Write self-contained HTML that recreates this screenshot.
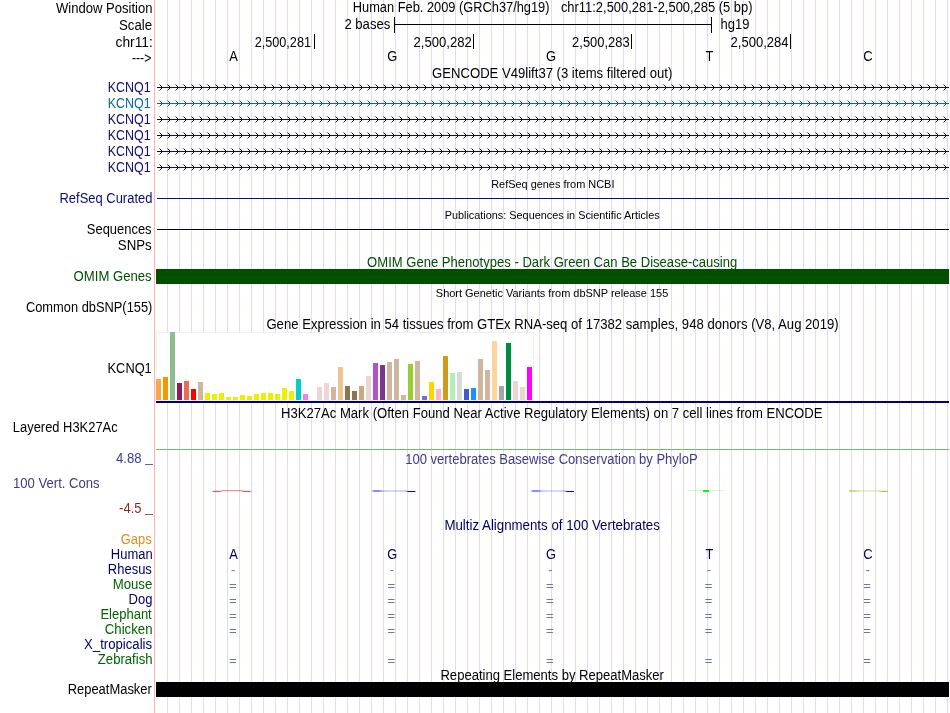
<!DOCTYPE html>
<html lang="en"><head><meta charset="utf-8"><title>UCSC Genome Browser - hg19 chr11:2,500,281-2,500,285</title>
<style>html,body{margin:0;padding:0;background:#fff}svg{display:block;filter:opacity(1)}text{font-family:"Liberation Sans",Arial,Helvetica,sans-serif;font-size:14px}.s{font-size:11.5px}.e{font-size:13px}.r{text-anchor:end}.m{text-anchor:middle}</style></head><body>
<svg width="950" height="713" viewBox="0 0 950 713">
<rect width="950" height="713" fill="#fff"/>
<g shape-rendering="crispEdges">
<path d="M167.5 0V713M179.5 0V713M191.5 0V713M203.5 0V713M215.5 0V713M227.5 0V713M239.5 0V713M251.5 0V713M263.5 0V713M275.5 0V713M287.5 0V713M299.5 0V713M311.5 0V713M323.5 0V713M335.5 0V713M347.5 0V713M359.5 0V713M371.5 0V713M383.5 0V713M395.5 0V713M407.5 0V713M419.5 0V713M431.5 0V713M443.5 0V713M455.5 0V713M467.5 0V713M479.5 0V713M491.5 0V713M503.5 0V713M515.5 0V713M527.5 0V713M539.5 0V713M551.5 0V713M563.5 0V713M575.5 0V713M587.5 0V713M599.5 0V713M611.5 0V713M623.5 0V713M635.5 0V713M647.5 0V713M659.5 0V713M671.5 0V713M683.5 0V713M695.5 0V713M707.5 0V713M719.5 0V713M731.5 0V713M743.5 0V713M755.5 0V713M767.5 0V713M779.5 0V713M791.5 0V713M803.5 0V713M815.5 0V713M827.5 0V713M839.5 0V713M851.5 0V713M863.5 0V713M875.5 0V713M887.5 0V713M899.5 0V713M911.5 0V713M923.5 0V713M935.5 0V713M947.5 0V713" stroke="#dcdcff" stroke-width="1" fill="none"/>
<rect x="154" y="0" width="1" height="713" fill="#ffb4b4"/>
</g>
<text x="56.00" y="13" textLength="96.52" lengthAdjust="spacingAndGlyphs">Window Position</text>
<text x="119.01" y="30" textLength="33.09" lengthAdjust="spacingAndGlyphs">Scale</text>
<text x="115.59" y="47" textLength="37.24" lengthAdjust="spacingAndGlyphs">chr11:</text>
<text x="131.96" y="63" textLength="19.33" lengthAdjust="spacingAndGlyphs">---&gt;</text>
<text x="352.77" y="12" textLength="196.76" lengthAdjust="spacingAndGlyphs">Human Feb. 2009 (GRCh37/hg19)</text>
<text x="560.92" y="12" textLength="191.63" lengthAdjust="spacingAndGlyphs">chr11:2,500,281-2,500,285 (5 bp)</text>
<text x="344.42" y="29" textLength="45.90" lengthAdjust="spacingAndGlyphs">2 bases</text>
<text x="720.57" y="29" textLength="28.83" lengthAdjust="spacingAndGlyphs">hg19</text>
<g shape-rendering="crispEdges" fill="#000">
<rect x="394" y="24" width="318" height="1"/><rect x="394" y="17" width="1" height="16"/><rect x="711" y="17" width="1" height="16"/>
<rect x="314" y="34" width="1" height="15"/>
<rect x="473" y="34" width="1" height="15"/>
<rect x="631" y="34" width="1" height="15"/>
<rect x="790" y="34" width="1" height="15"/>
</g>
<text x="254.63" y="47" textLength="56.37" lengthAdjust="spacingAndGlyphs">2,500,281</text>
<text x="413.52" y="47" textLength="58.21" lengthAdjust="spacingAndGlyphs">2,500,282</text>
<text x="572.12" y="47" textLength="57.58" lengthAdjust="spacingAndGlyphs">2,500,283</text>
<text x="730.62" y="47" textLength="57.97" lengthAdjust="spacingAndGlyphs">2,500,284</text>
<text x="229.19" y="61" textLength="8.60" lengthAdjust="spacingAndGlyphs">A</text>
<text x="387.28" y="61" textLength="10.01" lengthAdjust="spacingAndGlyphs">G</text>
<text x="545.88" y="61" textLength="10.01" lengthAdjust="spacingAndGlyphs">G</text>
<text x="705.38" y="61" textLength="7.89" lengthAdjust="spacingAndGlyphs">T</text>
<text x="863.19" y="61" textLength="9.41" lengthAdjust="spacingAndGlyphs">C</text>
<text x="432.12" y="78" textLength="240.22" lengthAdjust="spacingAndGlyphs">GENCODE V49lift37 (3 items filtered out)</text>
<text x="107.80" y="92" fill="#0c0c78" textLength="42.94" lengthAdjust="spacingAndGlyphs">KCNQ1</text>
<rect x="157" y="87" width="792" height="1" fill="#0c0c78" shape-rendering="crispEdges"/>
<path d="M159 84L162 87L159 90M167 84L170 87L167 90M175 84L178 87L175 90M183 84L186 87L183 90M191 84L194 87L191 90M199 84L202 87L199 90M207 84L210 87L207 90M215 84L218 87L215 90M223 84L226 87L223 90M231 84L234 87L231 90M239 84L242 87L239 90M247 84L250 87L247 90M255 84L258 87L255 90M263 84L266 87L263 90M271 84L274 87L271 90M279 84L282 87L279 90M287 84L290 87L287 90M295 84L298 87L295 90M303 84L306 87L303 90M311 84L314 87L311 90M319 84L322 87L319 90M327 84L330 87L327 90M335 84L338 87L335 90M343 84L346 87L343 90M351 84L354 87L351 90M359 84L362 87L359 90M367 84L370 87L367 90M375 84L378 87L375 90M383 84L386 87L383 90M391 84L394 87L391 90M399 84L402 87L399 90M407 84L410 87L407 90M415 84L418 87L415 90M423 84L426 87L423 90M431 84L434 87L431 90M439 84L442 87L439 90M447 84L450 87L447 90M455 84L458 87L455 90M463 84L466 87L463 90M471 84L474 87L471 90M479 84L482 87L479 90M487 84L490 87L487 90M495 84L498 87L495 90M503 84L506 87L503 90M511 84L514 87L511 90M519 84L522 87L519 90M527 84L530 87L527 90M535 84L538 87L535 90M543 84L546 87L543 90M551 84L554 87L551 90M559 84L562 87L559 90M567 84L570 87L567 90M575 84L578 87L575 90M583 84L586 87L583 90M591 84L594 87L591 90M599 84L602 87L599 90M607 84L610 87L607 90M615 84L618 87L615 90M623 84L626 87L623 90M631 84L634 87L631 90M639 84L642 87L639 90M647 84L650 87L647 90M655 84L658 87L655 90M663 84L666 87L663 90M671 84L674 87L671 90M679 84L682 87L679 90M687 84L690 87L687 90M695 84L698 87L695 90M703 84L706 87L703 90M711 84L714 87L711 90M719 84L722 87L719 90M727 84L730 87L727 90M735 84L738 87L735 90M743 84L746 87L743 90M751 84L754 87L751 90M759 84L762 87L759 90M767 84L770 87L767 90M775 84L778 87L775 90M783 84L786 87L783 90M791 84L794 87L791 90M799 84L802 87L799 90M807 84L810 87L807 90M815 84L818 87L815 90M823 84L826 87L823 90M831 84L834 87L831 90M839 84L842 87L839 90M847 84L850 87L847 90M855 84L858 87L855 90M863 84L866 87L863 90M871 84L874 87L871 90M879 84L882 87L879 90M887 84L890 87L887 90M895 84L898 87L895 90M903 84L906 87L903 90M911 84L914 87L911 90M919 84L922 87L919 90M927 84L930 87L927 90M935 84L938 87L935 90M943 84L946 87L943 90" transform="translate(.5 .5)" stroke="#0c0c78" stroke-width="1" fill="none"/>
<text x="107.80" y="108" fill="#0b66ad" textLength="42.94" lengthAdjust="spacingAndGlyphs">KCNQ1</text>
<rect x="157" y="103" width="792" height="1" fill="#0b66ad" shape-rendering="crispEdges"/>
<path d="M159 100L162 103L159 106M167 100L170 103L167 106M175 100L178 103L175 106M183 100L186 103L183 106M191 100L194 103L191 106M199 100L202 103L199 106M207 100L210 103L207 106M215 100L218 103L215 106M223 100L226 103L223 106M231 100L234 103L231 106M239 100L242 103L239 106M247 100L250 103L247 106M255 100L258 103L255 106M263 100L266 103L263 106M271 100L274 103L271 106M279 100L282 103L279 106M287 100L290 103L287 106M295 100L298 103L295 106M303 100L306 103L303 106M311 100L314 103L311 106M319 100L322 103L319 106M327 100L330 103L327 106M335 100L338 103L335 106M343 100L346 103L343 106M351 100L354 103L351 106M359 100L362 103L359 106M367 100L370 103L367 106M375 100L378 103L375 106M383 100L386 103L383 106M391 100L394 103L391 106M399 100L402 103L399 106M407 100L410 103L407 106M415 100L418 103L415 106M423 100L426 103L423 106M431 100L434 103L431 106M439 100L442 103L439 106M447 100L450 103L447 106M455 100L458 103L455 106M463 100L466 103L463 106M471 100L474 103L471 106M479 100L482 103L479 106M487 100L490 103L487 106M495 100L498 103L495 106M503 100L506 103L503 106M511 100L514 103L511 106M519 100L522 103L519 106M527 100L530 103L527 106M535 100L538 103L535 106M543 100L546 103L543 106M551 100L554 103L551 106M559 100L562 103L559 106M567 100L570 103L567 106M575 100L578 103L575 106M583 100L586 103L583 106M591 100L594 103L591 106M599 100L602 103L599 106M607 100L610 103L607 106M615 100L618 103L615 106M623 100L626 103L623 106M631 100L634 103L631 106M639 100L642 103L639 106M647 100L650 103L647 106M655 100L658 103L655 106M663 100L666 103L663 106M671 100L674 103L671 106M679 100L682 103L679 106M687 100L690 103L687 106M695 100L698 103L695 106M703 100L706 103L703 106M711 100L714 103L711 106M719 100L722 103L719 106M727 100L730 103L727 106M735 100L738 103L735 106M743 100L746 103L743 106M751 100L754 103L751 106M759 100L762 103L759 106M767 100L770 103L767 106M775 100L778 103L775 106M783 100L786 103L783 106M791 100L794 103L791 106M799 100L802 103L799 106M807 100L810 103L807 106M815 100L818 103L815 106M823 100L826 103L823 106M831 100L834 103L831 106M839 100L842 103L839 106M847 100L850 103L847 106M855 100L858 103L855 106M863 100L866 103L863 106M871 100L874 103L871 106M879 100L882 103L879 106M887 100L890 103L887 106M895 100L898 103L895 106M903 100L906 103L903 106M911 100L914 103L911 106M919 100L922 103L919 106M927 100L930 103L927 106M935 100L938 103L935 106M943 100L946 103L943 106" transform="translate(.5 .5)" stroke="#0b66ad" stroke-width="1" fill="none"/>
<text x="107.80" y="124" fill="#0c0c78" textLength="42.94" lengthAdjust="spacingAndGlyphs">KCNQ1</text>
<rect x="157" y="119" width="792" height="1" fill="#0c0c78" shape-rendering="crispEdges"/>
<path d="M159 116L162 119L159 122M167 116L170 119L167 122M175 116L178 119L175 122M183 116L186 119L183 122M191 116L194 119L191 122M199 116L202 119L199 122M207 116L210 119L207 122M215 116L218 119L215 122M223 116L226 119L223 122M231 116L234 119L231 122M239 116L242 119L239 122M247 116L250 119L247 122M255 116L258 119L255 122M263 116L266 119L263 122M271 116L274 119L271 122M279 116L282 119L279 122M287 116L290 119L287 122M295 116L298 119L295 122M303 116L306 119L303 122M311 116L314 119L311 122M319 116L322 119L319 122M327 116L330 119L327 122M335 116L338 119L335 122M343 116L346 119L343 122M351 116L354 119L351 122M359 116L362 119L359 122M367 116L370 119L367 122M375 116L378 119L375 122M383 116L386 119L383 122M391 116L394 119L391 122M399 116L402 119L399 122M407 116L410 119L407 122M415 116L418 119L415 122M423 116L426 119L423 122M431 116L434 119L431 122M439 116L442 119L439 122M447 116L450 119L447 122M455 116L458 119L455 122M463 116L466 119L463 122M471 116L474 119L471 122M479 116L482 119L479 122M487 116L490 119L487 122M495 116L498 119L495 122M503 116L506 119L503 122M511 116L514 119L511 122M519 116L522 119L519 122M527 116L530 119L527 122M535 116L538 119L535 122M543 116L546 119L543 122M551 116L554 119L551 122M559 116L562 119L559 122M567 116L570 119L567 122M575 116L578 119L575 122M583 116L586 119L583 122M591 116L594 119L591 122M599 116L602 119L599 122M607 116L610 119L607 122M615 116L618 119L615 122M623 116L626 119L623 122M631 116L634 119L631 122M639 116L642 119L639 122M647 116L650 119L647 122M655 116L658 119L655 122M663 116L666 119L663 122M671 116L674 119L671 122M679 116L682 119L679 122M687 116L690 119L687 122M695 116L698 119L695 122M703 116L706 119L703 122M711 116L714 119L711 122M719 116L722 119L719 122M727 116L730 119L727 122M735 116L738 119L735 122M743 116L746 119L743 122M751 116L754 119L751 122M759 116L762 119L759 122M767 116L770 119L767 122M775 116L778 119L775 122M783 116L786 119L783 122M791 116L794 119L791 122M799 116L802 119L799 122M807 116L810 119L807 122M815 116L818 119L815 122M823 116L826 119L823 122M831 116L834 119L831 122M839 116L842 119L839 122M847 116L850 119L847 122M855 116L858 119L855 122M863 116L866 119L863 122M871 116L874 119L871 122M879 116L882 119L879 122M887 116L890 119L887 122M895 116L898 119L895 122M903 116L906 119L903 122M911 116L914 119L911 122M919 116L922 119L919 122M927 116L930 119L927 122M935 116L938 119L935 122M943 116L946 119L943 122" transform="translate(.5 .5)" stroke="#0c0c78" stroke-width="1" fill="none"/>
<text x="107.80" y="140" fill="#0c0c78" textLength="42.94" lengthAdjust="spacingAndGlyphs">KCNQ1</text>
<rect x="157" y="135" width="792" height="1" fill="#0c0c78" shape-rendering="crispEdges"/>
<path d="M159 132L162 135L159 138M167 132L170 135L167 138M175 132L178 135L175 138M183 132L186 135L183 138M191 132L194 135L191 138M199 132L202 135L199 138M207 132L210 135L207 138M215 132L218 135L215 138M223 132L226 135L223 138M231 132L234 135L231 138M239 132L242 135L239 138M247 132L250 135L247 138M255 132L258 135L255 138M263 132L266 135L263 138M271 132L274 135L271 138M279 132L282 135L279 138M287 132L290 135L287 138M295 132L298 135L295 138M303 132L306 135L303 138M311 132L314 135L311 138M319 132L322 135L319 138M327 132L330 135L327 138M335 132L338 135L335 138M343 132L346 135L343 138M351 132L354 135L351 138M359 132L362 135L359 138M367 132L370 135L367 138M375 132L378 135L375 138M383 132L386 135L383 138M391 132L394 135L391 138M399 132L402 135L399 138M407 132L410 135L407 138M415 132L418 135L415 138M423 132L426 135L423 138M431 132L434 135L431 138M439 132L442 135L439 138M447 132L450 135L447 138M455 132L458 135L455 138M463 132L466 135L463 138M471 132L474 135L471 138M479 132L482 135L479 138M487 132L490 135L487 138M495 132L498 135L495 138M503 132L506 135L503 138M511 132L514 135L511 138M519 132L522 135L519 138M527 132L530 135L527 138M535 132L538 135L535 138M543 132L546 135L543 138M551 132L554 135L551 138M559 132L562 135L559 138M567 132L570 135L567 138M575 132L578 135L575 138M583 132L586 135L583 138M591 132L594 135L591 138M599 132L602 135L599 138M607 132L610 135L607 138M615 132L618 135L615 138M623 132L626 135L623 138M631 132L634 135L631 138M639 132L642 135L639 138M647 132L650 135L647 138M655 132L658 135L655 138M663 132L666 135L663 138M671 132L674 135L671 138M679 132L682 135L679 138M687 132L690 135L687 138M695 132L698 135L695 138M703 132L706 135L703 138M711 132L714 135L711 138M719 132L722 135L719 138M727 132L730 135L727 138M735 132L738 135L735 138M743 132L746 135L743 138M751 132L754 135L751 138M759 132L762 135L759 138M767 132L770 135L767 138M775 132L778 135L775 138M783 132L786 135L783 138M791 132L794 135L791 138M799 132L802 135L799 138M807 132L810 135L807 138M815 132L818 135L815 138M823 132L826 135L823 138M831 132L834 135L831 138M839 132L842 135L839 138M847 132L850 135L847 138M855 132L858 135L855 138M863 132L866 135L863 138M871 132L874 135L871 138M879 132L882 135L879 138M887 132L890 135L887 138M895 132L898 135L895 138M903 132L906 135L903 138M911 132L914 135L911 138M919 132L922 135L919 138M927 132L930 135L927 138M935 132L938 135L935 138M943 132L946 135L943 138" transform="translate(.5 .5)" stroke="#0c0c78" stroke-width="1" fill="none"/>
<text x="107.80" y="156" fill="#0c0c78" textLength="42.94" lengthAdjust="spacingAndGlyphs">KCNQ1</text>
<rect x="157" y="151" width="792" height="1" fill="#0c0c78" shape-rendering="crispEdges"/>
<path d="M159 148L162 151L159 154M167 148L170 151L167 154M175 148L178 151L175 154M183 148L186 151L183 154M191 148L194 151L191 154M199 148L202 151L199 154M207 148L210 151L207 154M215 148L218 151L215 154M223 148L226 151L223 154M231 148L234 151L231 154M239 148L242 151L239 154M247 148L250 151L247 154M255 148L258 151L255 154M263 148L266 151L263 154M271 148L274 151L271 154M279 148L282 151L279 154M287 148L290 151L287 154M295 148L298 151L295 154M303 148L306 151L303 154M311 148L314 151L311 154M319 148L322 151L319 154M327 148L330 151L327 154M335 148L338 151L335 154M343 148L346 151L343 154M351 148L354 151L351 154M359 148L362 151L359 154M367 148L370 151L367 154M375 148L378 151L375 154M383 148L386 151L383 154M391 148L394 151L391 154M399 148L402 151L399 154M407 148L410 151L407 154M415 148L418 151L415 154M423 148L426 151L423 154M431 148L434 151L431 154M439 148L442 151L439 154M447 148L450 151L447 154M455 148L458 151L455 154M463 148L466 151L463 154M471 148L474 151L471 154M479 148L482 151L479 154M487 148L490 151L487 154M495 148L498 151L495 154M503 148L506 151L503 154M511 148L514 151L511 154M519 148L522 151L519 154M527 148L530 151L527 154M535 148L538 151L535 154M543 148L546 151L543 154M551 148L554 151L551 154M559 148L562 151L559 154M567 148L570 151L567 154M575 148L578 151L575 154M583 148L586 151L583 154M591 148L594 151L591 154M599 148L602 151L599 154M607 148L610 151L607 154M615 148L618 151L615 154M623 148L626 151L623 154M631 148L634 151L631 154M639 148L642 151L639 154M647 148L650 151L647 154M655 148L658 151L655 154M663 148L666 151L663 154M671 148L674 151L671 154M679 148L682 151L679 154M687 148L690 151L687 154M695 148L698 151L695 154M703 148L706 151L703 154M711 148L714 151L711 154M719 148L722 151L719 154M727 148L730 151L727 154M735 148L738 151L735 154M743 148L746 151L743 154M751 148L754 151L751 154M759 148L762 151L759 154M767 148L770 151L767 154M775 148L778 151L775 154M783 148L786 151L783 154M791 148L794 151L791 154M799 148L802 151L799 154M807 148L810 151L807 154M815 148L818 151L815 154M823 148L826 151L823 154M831 148L834 151L831 154M839 148L842 151L839 154M847 148L850 151L847 154M855 148L858 151L855 154M863 148L866 151L863 154M871 148L874 151L871 154M879 148L882 151L879 154M887 148L890 151L887 154M895 148L898 151L895 154M903 148L906 151L903 154M911 148L914 151L911 154M919 148L922 151L919 154M927 148L930 151L927 154M935 148L938 151L935 154M943 148L946 151L943 154" transform="translate(.5 .5)" stroke="#0c0c78" stroke-width="1" fill="none"/>
<text x="107.80" y="172" fill="#0c0c78" textLength="42.94" lengthAdjust="spacingAndGlyphs">KCNQ1</text>
<rect x="157" y="167" width="792" height="1" fill="#0c0c78" shape-rendering="crispEdges"/>
<path d="M159 164L162 167L159 170M167 164L170 167L167 170M175 164L178 167L175 170M183 164L186 167L183 170M191 164L194 167L191 170M199 164L202 167L199 170M207 164L210 167L207 170M215 164L218 167L215 170M223 164L226 167L223 170M231 164L234 167L231 170M239 164L242 167L239 170M247 164L250 167L247 170M255 164L258 167L255 170M263 164L266 167L263 170M271 164L274 167L271 170M279 164L282 167L279 170M287 164L290 167L287 170M295 164L298 167L295 170M303 164L306 167L303 170M311 164L314 167L311 170M319 164L322 167L319 170M327 164L330 167L327 170M335 164L338 167L335 170M343 164L346 167L343 170M351 164L354 167L351 170M359 164L362 167L359 170M367 164L370 167L367 170M375 164L378 167L375 170M383 164L386 167L383 170M391 164L394 167L391 170M399 164L402 167L399 170M407 164L410 167L407 170M415 164L418 167L415 170M423 164L426 167L423 170M431 164L434 167L431 170M439 164L442 167L439 170M447 164L450 167L447 170M455 164L458 167L455 170M463 164L466 167L463 170M471 164L474 167L471 170M479 164L482 167L479 170M487 164L490 167L487 170M495 164L498 167L495 170M503 164L506 167L503 170M511 164L514 167L511 170M519 164L522 167L519 170M527 164L530 167L527 170M535 164L538 167L535 170M543 164L546 167L543 170M551 164L554 167L551 170M559 164L562 167L559 170M567 164L570 167L567 170M575 164L578 167L575 170M583 164L586 167L583 170M591 164L594 167L591 170M599 164L602 167L599 170M607 164L610 167L607 170M615 164L618 167L615 170M623 164L626 167L623 170M631 164L634 167L631 170M639 164L642 167L639 170M647 164L650 167L647 170M655 164L658 167L655 170M663 164L666 167L663 170M671 164L674 167L671 170M679 164L682 167L679 170M687 164L690 167L687 170M695 164L698 167L695 170M703 164L706 167L703 170M711 164L714 167L711 170M719 164L722 167L719 170M727 164L730 167L727 170M735 164L738 167L735 170M743 164L746 167L743 170M751 164L754 167L751 170M759 164L762 167L759 170M767 164L770 167L767 170M775 164L778 167L775 170M783 164L786 167L783 170M791 164L794 167L791 170M799 164L802 167L799 170M807 164L810 167L807 170M815 164L818 167L815 170M823 164L826 167L823 170M831 164L834 167L831 170M839 164L842 167L839 170M847 164L850 167L847 170M855 164L858 167L855 170M863 164L866 167L863 170M871 164L874 167L871 170M879 164L882 167L879 170M887 164L890 167L887 170M895 164L898 167L895 170M903 164L906 167L903 170M911 164L914 167L911 170M919 164L922 167L919 170M927 164L930 167L927 170M935 164L938 167L935 170M943 164L946 167L943 170" transform="translate(.5 .5)" stroke="#0c0c78" stroke-width="1" fill="none"/>
<text x="491.17" y="188" class="s" textLength="123.30" lengthAdjust="spacingAndGlyphs">RefSeq genes from NCBI</text>
<text x="59.46" y="203" fill="#0c0c78" textLength="92.98" lengthAdjust="spacingAndGlyphs">RefSeq Curated</text>
<rect x="157" y="198" width="792" height="1" fill="#0c0c78" shape-rendering="crispEdges"/>
<text x="444.67" y="219" class="s" textLength="215.06" lengthAdjust="spacingAndGlyphs">Publications: Sequences in Scientific Articles</text>
<text x="86.82" y="234" textLength="64.78" lengthAdjust="spacingAndGlyphs">Sequences</text>
<rect x="157" y="229" width="792" height="1" fill="#000" shape-rendering="crispEdges"/>
<text x="117.81" y="250" textLength="33.91" lengthAdjust="spacingAndGlyphs">SNPs</text>
<text x="367.12" y="267" fill="#005000" textLength="370.18" lengthAdjust="spacingAndGlyphs">OMIM Gene Phenotypes - Dark Green Can Be Disease-causing</text>
<text x="73.61" y="281" fill="#005000" textLength="78.05" lengthAdjust="spacingAndGlyphs">OMIM Genes</text>
<rect x="156" y="269" width="793" height="15" fill="#005000" shape-rendering="crispEdges"/>
<text x="435.82" y="297" class="s" textLength="232.45" lengthAdjust="spacingAndGlyphs">Short Genetic Variants from dbSNP release 155</text>
<text x="25.93" y="312" textLength="126.46" lengthAdjust="spacingAndGlyphs">Common dbSNP(155)</text>
<text x="266.41" y="329" textLength="572.21" lengthAdjust="spacingAndGlyphs">Gene Expression in 54 tissues from GTEx RNA-seq of 17382 samples, 948 donors (V8, Aug 2019)</text>
<text x="107.57" y="373" textLength="44.19" lengthAdjust="spacingAndGlyphs">KCNQ1</text>
<g shape-rendering="crispEdges">
<rect x="156" y="332" width="378" height="69" fill="#efefef"/><rect x="157" y="333" width="376" height="67" fill="#fff"/>
<rect x="156" y="379" width="5" height="21" fill="#FFA54F"/>
<rect x="163" y="377" width="5" height="23" fill="#EE9A00"/>
<rect x="170" y="332" width="5" height="68" fill="#8FBC8F"/>
<rect x="177" y="383" width="5" height="17" fill="#8B1C62"/>
<rect x="184" y="381" width="5" height="19" fill="#EE6A50"/>
<rect x="191" y="389" width="5" height="11" fill="#FF0000"/>
<rect x="198" y="382" width="5" height="18" fill="#CDB79E"/>
<rect x="205" y="393" width="5" height="7" fill="#EEEE00"/>
<rect x="212" y="394" width="5" height="6" fill="#EEEE00"/>
<rect x="219" y="393" width="5" height="7" fill="#EEEE00"/>
<rect x="226" y="397" width="5" height="3" fill="#EEEE00"/>
<rect x="233" y="397" width="5" height="3" fill="#EEEE00"/>
<rect x="240" y="395" width="5" height="5" fill="#EEEE00"/>
<rect x="247" y="396" width="5" height="4" fill="#EEEE00"/>
<rect x="254" y="394" width="5" height="6" fill="#EEEE00"/>
<rect x="261" y="393" width="5" height="7" fill="#EEEE00"/>
<rect x="268" y="393" width="5" height="7" fill="#EEEE00"/>
<rect x="275" y="394" width="5" height="6" fill="#EEEE00"/>
<rect x="282" y="388" width="5" height="12" fill="#EEEE00"/>
<rect x="289" y="391" width="5" height="9" fill="#EEEE00"/>
<rect x="296" y="379" width="5" height="21" fill="#00CDCD"/>
<rect x="303" y="394" width="5" height="6" fill="#EE82EE"/>
<rect x="317" y="387" width="5" height="13" fill="#EED5D2"/>
<rect x="324" y="383" width="5" height="17" fill="#EED5D2"/>
<rect x="331" y="387" width="5" height="13" fill="#CDB79E"/>
<rect x="338" y="367" width="5" height="33" fill="#EEC591"/>
<rect x="345" y="386" width="5" height="14" fill="#8B7355"/>
<rect x="352" y="391" width="5" height="9" fill="#8B7355"/>
<rect x="359" y="386" width="5" height="14" fill="#CDAA7D"/>
<rect x="366" y="376" width="5" height="24" fill="#EED5D2"/>
<rect x="373" y="363" width="5" height="37" fill="#B452CD"/>
<rect x="380" y="365" width="5" height="35" fill="#7A378B"/>
<rect x="387" y="362" width="5" height="38" fill="#CDB79E"/>
<rect x="394" y="359" width="5" height="41" fill="#CDB79E"/>
<rect x="401" y="395" width="5" height="5" fill="#CDB79E"/>
<rect x="408" y="364" width="5" height="36" fill="#9ACD32"/>
<rect x="415" y="361" width="5" height="39" fill="#CDB79E"/>
<rect x="422" y="396" width="5" height="4" fill="#7A67EE"/>
<rect x="429" y="382" width="5" height="18" fill="#FFD700"/>
<rect x="436" y="389" width="5" height="11" fill="#FFB6C1"/>
<rect x="443" y="356" width="5" height="44" fill="#CD9B1D"/>
<rect x="450" y="373" width="5" height="27" fill="#B4EEB4"/>
<rect x="457" y="372" width="5" height="28" fill="#D9D9D9"/>
<rect x="464" y="389" width="5" height="11" fill="#3A5FCD"/>
<rect x="471" y="388" width="5" height="12" fill="#1E90FF"/>
<rect x="478" y="359" width="5" height="41" fill="#CDB79E"/>
<rect x="485" y="370" width="5" height="30" fill="#CDB79E"/>
<rect x="492" y="341" width="5" height="59" fill="#FFD39B"/>
<rect x="499" y="386" width="5" height="14" fill="#A6A6A6"/>
<rect x="506" y="343" width="5" height="57" fill="#008B45"/>
<rect x="513" y="381" width="5" height="19" fill="#EED5D2"/>
<rect x="520" y="387" width="5" height="13" fill="#EED5D2"/>
<rect x="527" y="367" width="5" height="33" fill="#FF00FF"/>
<rect x="156" y="401" width="793" height="2" fill="#00007f"/>
</g>
<text x="280.95" y="418" textLength="541.55" lengthAdjust="spacingAndGlyphs">H3K27Ac Mark (Often Found Near Active Regulatory Elements) on 7 cell lines from ENCODE</text>
<text x="12.86" y="432" textLength="104.80" lengthAdjust="spacingAndGlyphs">Layered H3K27Ac</text>
<rect x="156" y="449" width="793" height="1" fill="#6cbf5c" shape-rendering="crispEdges"/>
<text x="405.17" y="464" fill="#3c3c8c" textLength="292.54" lengthAdjust="spacingAndGlyphs">100 vertebrates Basewise Conservation by PhyloP</text>
<text x="115.96" y="463" fill="#3c3c8c" textLength="25.62" lengthAdjust="spacingAndGlyphs">4.88</text>
<rect x="145" y="464" width="8" height="1" opacity=".8" fill="#3c3c8c" shape-rendering="crispEdges"/>
<text x="12.96" y="488" fill="#3c3c8c" textLength="86.70" lengthAdjust="spacingAndGlyphs">100 Vert. Cons</text>
<text x="119.12" y="513" fill="#8c2828" textLength="22.34" lengthAdjust="spacingAndGlyphs">-4.5</text>
<rect x="145" y="514" width="8" height="1" opacity=".8" fill="#8c2828" shape-rendering="crispEdges"/>
<linearGradient id="ga" gradientUnits="userSpaceOnUse" x1="212" y1="0" x2="251.5" y2="0"><stop offset="0" stop-color="#ff0000" stop-opacity="0.35"/><stop offset="0.06" stop-color="#ff0000" stop-opacity="0.85"/><stop offset="0.2" stop-color="#ff0000" stop-opacity="0.8"/><stop offset="0.26" stop-color="#ff0000" stop-opacity="0.55"/><stop offset="0.5" stop-color="#ff0000" stop-opacity="0.5"/><stop offset="0.74" stop-color="#ff0000" stop-opacity="0.55"/><stop offset="0.8" stop-color="#ff0000" stop-opacity="0.8"/><stop offset="0.94" stop-color="#ff0000" stop-opacity="0.85"/><stop offset="1" stop-color="#ff0000" stop-opacity="0.35"/></linearGradient>
<path d="M212 491.4H220.5L222.5 490.6H241L243 491.4H251.5" fill="none" stroke="url(#ga)" stroke-width="1"/>
<linearGradient id="gg1" gradientUnits="userSpaceOnUse" x1="372.2" y1="0" x2="415.4" y2="0"><stop offset="0" stop-color="#0000ff" stop-opacity="0.5"/><stop offset="0.04" stop-color="#0000ff" stop-opacity="0.9"/><stop offset="0.15" stop-color="#0000ff" stop-opacity="0.9"/><stop offset="0.26" stop-color="#0000ff" stop-opacity="0.38"/><stop offset="0.5" stop-color="#0000ff" stop-opacity="0.3"/><stop offset="0.74" stop-color="#0000ff" stop-opacity="0.35"/><stop offset="0.8" stop-color="#0000ff" stop-opacity="0.55"/><stop offset="0.84" stop-color="#0000ff" stop-opacity="1"/><stop offset="1" stop-color="#0000ff" stop-opacity="1"/></linearGradient>
<path d="M372.2 491H405.9L407.9 491.5H415.4" fill="none" stroke="url(#gg1)" stroke-width="1.15"/>
<linearGradient id="gg2" gradientUnits="userSpaceOnUse" x1="531.2" y1="0" x2="574.0" y2="0"><stop offset="0" stop-color="#0000ff" stop-opacity="0.5"/><stop offset="0.04" stop-color="#0000ff" stop-opacity="0.9"/><stop offset="0.15" stop-color="#0000ff" stop-opacity="0.9"/><stop offset="0.26" stop-color="#0000ff" stop-opacity="0.38"/><stop offset="0.5" stop-color="#0000ff" stop-opacity="0.3"/><stop offset="0.74" stop-color="#0000ff" stop-opacity="0.35"/><stop offset="0.8" stop-color="#0000ff" stop-opacity="0.55"/><stop offset="0.84" stop-color="#0000ff" stop-opacity="1"/><stop offset="1" stop-color="#0000ff" stop-opacity="1"/></linearGradient>
<path d="M531.2 491H564.5L566.5 491.5H574.0" fill="none" stroke="url(#gg2)" stroke-width="1.15"/>
<rect x="687" y="490" width="38" height="1" fill="#00ff00" opacity=".2" shape-rendering="crispEdges"/><rect x="703" y="490" width="6" height="2" fill="#00ff00" shape-rendering="crispEdges"/>
<linearGradient id="gc" gradientUnits="userSpaceOnUse" x1="848.5" y1="0" x2="888.2" y2="0"><stop offset="0" stop-color="#a8a800" stop-opacity="0.45"/><stop offset="0.04" stop-color="#a8a800" stop-opacity="0.95"/><stop offset="0.16" stop-color="#a8a800" stop-opacity="0.9"/><stop offset="0.26" stop-color="#a8a800" stop-opacity="0.45"/><stop offset="0.5" stop-color="#a8a800" stop-opacity="0.35"/><stop offset="0.74" stop-color="#a8a800" stop-opacity="0.4"/><stop offset="0.82" stop-color="#a8a800" stop-opacity="0.65"/><stop offset="0.9" stop-color="#a8a800" stop-opacity="0.8"/><stop offset="1" stop-color="#a8a800" stop-opacity="0.55"/></linearGradient>
<path d="M848.5 491H879L881 491.4H888.2" fill="none" stroke="url(#gc)" stroke-width="1.2"/>
<text x="444.43" y="530" fill="#000064" textLength="215.43" lengthAdjust="spacingAndGlyphs">Multiz Alignments of 100 Vertebrates</text>
<text x="120.72" y="544" fill="#e08c1e" textLength="30.91" lengthAdjust="spacingAndGlyphs">Gaps</text>
<text x="110.86" y="559" fill="#000064" textLength="41.76" lengthAdjust="spacingAndGlyphs">Human</text>
<text x="229.19" y="559" fill="#000064" textLength="8.60" lengthAdjust="spacingAndGlyphs">A</text>
<text x="387.28" y="559" fill="#000064" textLength="10.01" lengthAdjust="spacingAndGlyphs">G</text>
<text x="545.88" y="559" fill="#000064" textLength="10.01" lengthAdjust="spacingAndGlyphs">G</text>
<text x="705.38" y="559" fill="#000064" textLength="7.89" lengthAdjust="spacingAndGlyphs">T</text>
<text x="863.19" y="559" fill="#000064" textLength="9.41" lengthAdjust="spacingAndGlyphs">C</text>
<text x="107.86" y="574" fill="#000064" textLength="43.98" lengthAdjust="spacingAndGlyphs">Rhesus</text>
<text x="233.2" y="574" class="m e" fill="#7070aa">-</text>
<text x="391.8" y="574" class="m e" fill="#7070aa">-</text>
<text x="550.4" y="574" class="m e" fill="#7070aa">-</text>
<text x="709.0" y="574" class="m e" fill="#7070aa">-</text>
<text x="867.6" y="574" class="m e" fill="#7070aa">-</text>
<text x="112.74" y="589" fill="#006400" textLength="39.56" lengthAdjust="spacingAndGlyphs">Mouse</text>
<text x="232.7" y="590" class="m e" fill="#7070aa">=</text>
<text x="391.3" y="590" class="m e" fill="#7070aa">=</text>
<text x="549.9" y="590" class="m e" fill="#7070aa">=</text>
<text x="708.5" y="590" class="m e" fill="#7070aa">=</text>
<text x="867.1" y="590" class="m e" fill="#7070aa">=</text>
<text x="128.55" y="604" fill="#000064" textLength="23.90" lengthAdjust="spacingAndGlyphs">Dog</text>
<text x="232.7" y="605" class="m e" fill="#7070aa">=</text>
<text x="391.3" y="605" class="m e" fill="#7070aa">=</text>
<text x="549.9" y="605" class="m e" fill="#7070aa">=</text>
<text x="708.5" y="605" class="m e" fill="#7070aa">=</text>
<text x="867.1" y="605" class="m e" fill="#7070aa">=</text>
<text x="100.46" y="619" fill="#006400" textLength="51.27" lengthAdjust="spacingAndGlyphs">Elephant</text>
<text x="232.7" y="620" class="m e" fill="#7070aa">=</text>
<text x="391.3" y="620" class="m e" fill="#7070aa">=</text>
<text x="549.9" y="620" class="m e" fill="#7070aa">=</text>
<text x="708.5" y="620" class="m e" fill="#7070aa">=</text>
<text x="867.1" y="620" class="m e" fill="#7070aa">=</text>
<text x="104.81" y="634" fill="#006400" textLength="47.68" lengthAdjust="spacingAndGlyphs">Chicken</text>
<text x="232.7" y="635" class="m e" fill="#7070aa">=</text>
<text x="391.3" y="635" class="m e" fill="#7070aa">=</text>
<text x="549.9" y="635" class="m e" fill="#7070aa">=</text>
<text x="708.5" y="635" class="m e" fill="#7070aa">=</text>
<text x="867.1" y="635" class="m e" fill="#7070aa">=</text>
<text x="84.05" y="649" fill="#000064" textLength="68.02" lengthAdjust="spacingAndGlyphs">X_tropicalis</text>
<text x="97.85" y="664" fill="#006400" textLength="54.66" lengthAdjust="spacingAndGlyphs">Zebrafish</text>
<text x="232.7" y="665" class="m e" fill="#7070aa">=</text>
<text x="391.3" y="665" class="m e" fill="#7070aa">=</text>
<text x="549.9" y="665" class="m e" fill="#7070aa">=</text>
<text x="708.5" y="665" class="m e" fill="#7070aa">=</text>
<text x="867.1" y="665" class="m e" fill="#7070aa">=</text>
<text x="440.45" y="680" textLength="223.52" lengthAdjust="spacingAndGlyphs">Repeating Elements by RepeatMasker</text>
<text x="67.66" y="694" textLength="84.20" lengthAdjust="spacingAndGlyphs">RepeatMasker</text>
<rect x="156" y="682" width="793" height="15" fill="#000" shape-rendering="crispEdges"/>
</svg></body></html>
